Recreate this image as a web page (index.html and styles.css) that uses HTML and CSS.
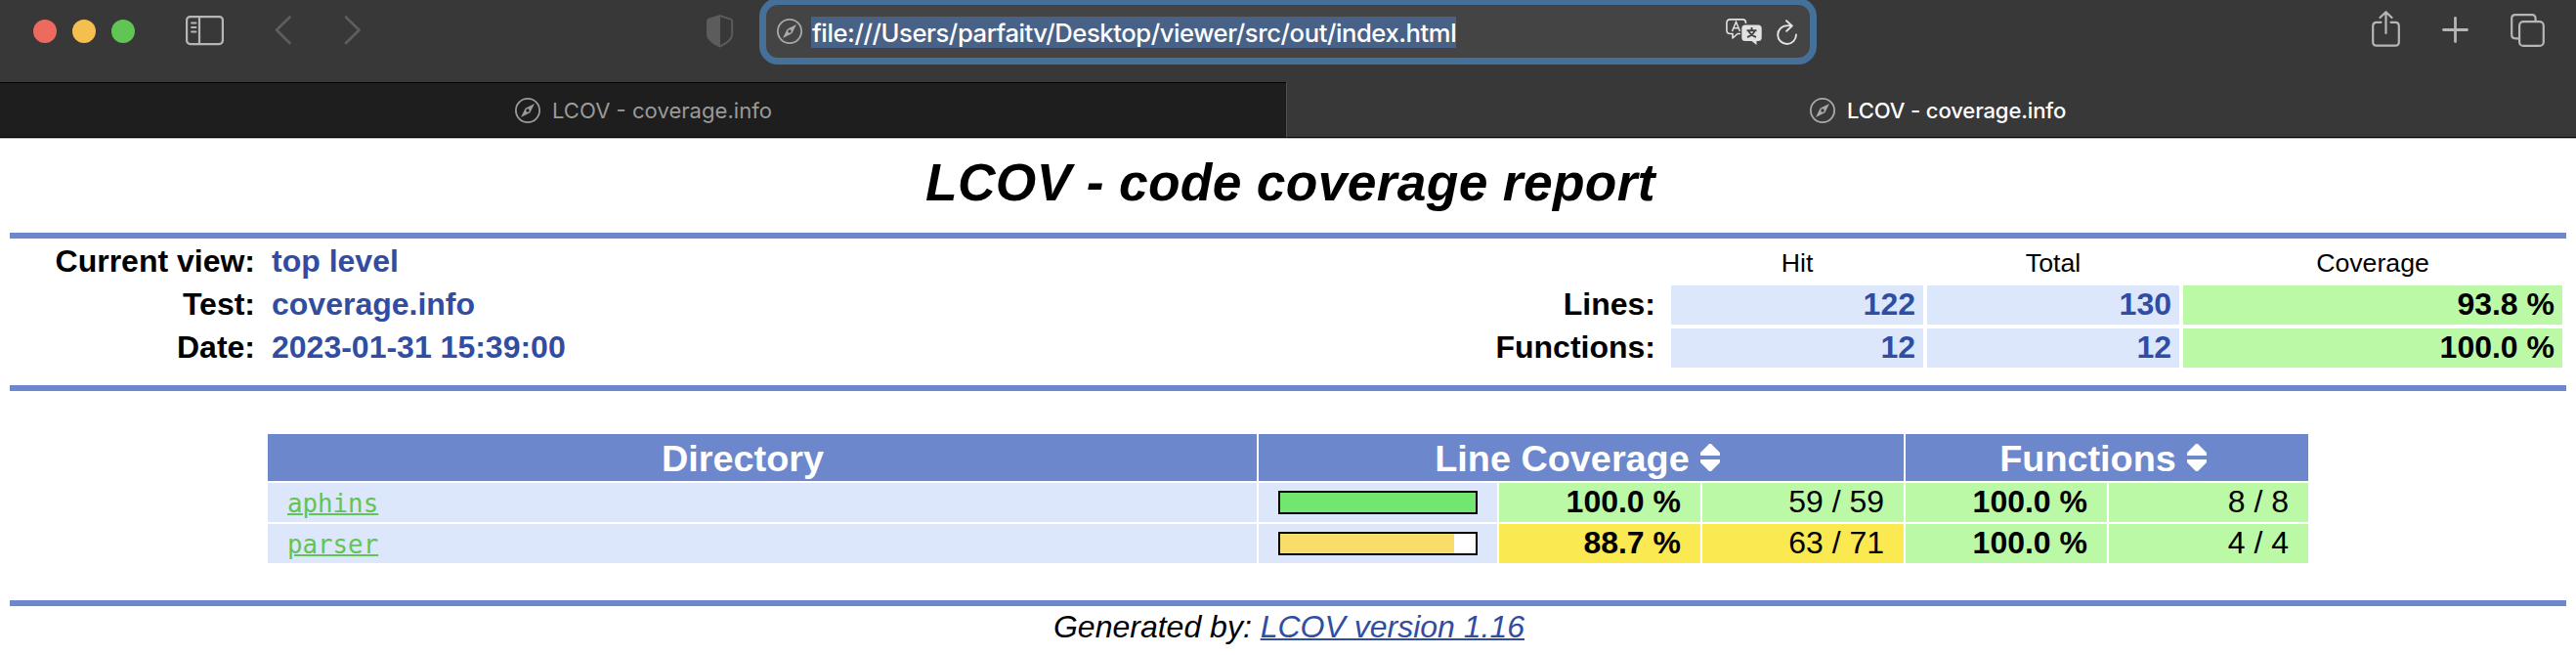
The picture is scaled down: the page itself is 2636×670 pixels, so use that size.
FILE: index.html
```html
<!DOCTYPE html>
<html lang="en">
<head>
<meta charset="utf-8">
<title>LCOV - coverage.info</title>
<link rel="stylesheet" href="styles.css">
</head>
<body>
<svg class="defs" width="0" height="0">
  <symbol id="compass" viewBox="0 0 26 26">
    <circle cx="13" cy="13" r="12.1" fill="none" stroke="currentColor" stroke-width="1.8"/>
    <path fill="currentColor" fill-rule="evenodd" d="M20 6 15.4 15.2 6 20 10.600 10.800ZM13 11.300a1.700 1.700 0 1 0 0 3.400a1.700 1.700 0 1 0 0-3.400Z"/>
  </symbol>
  <symbol id="sort" viewBox="0 0 20 28">
    <path fill="#fff" d="M9 0H11L20 9V12H0V9ZM0 16H20V19L11 28H9L0 19Z"/>
  </symbol>
</svg>
<header class="toolbar">
  <div class="tools-left">
    <div class="lights"><i class="light red"></i><i class="light yellow"></i><i class="light green"></i></div>
    <svg class="icon sidebar" width="40" height="32" viewBox="0 0 40 32"><rect x="1.1" y="1.1" width="36.8" height="28" rx="3.5"/><path d="M14 1V29"/><path class="thin" d="M6 7.5H10.5M6 12H10.5M6 16.5H10.5"/></svg>
    <svg class="icon dim back" width="18" height="30" viewBox="0 0 18 30"><path d="M15.5 1.5 2 14.8 15.5 28"/></svg>
    <svg class="icon dim forward" width="18" height="30" viewBox="0 0 18 30"><path d="M2 1.5 15.5 14.8 2 28"/></svg>
  </div>
  <svg class="shield" width="28" height="34" viewBox="0 0 28 34"><path fill="none" stroke="#5c5c5c" stroke-width="2" d="M14 1.2 24.800 4.600Q26.200 5.200 26.200 7V20C26.200 26 20 29.500 14 32.400C8 29.500 1.200 26 1.200 20V7Q1.200 5.200 2.500 4.600Z"/><path fill="#5c5c5c" d="M14 0V33.400C8 30.500 0 26 0 20V7Q0 5 2 4Z"/></svg>
  <div class="address">
    <svg class="compass url-compass" width="26" height="26"><use href="#compass"/></svg>
    <span class="selection"><span class="url">file:///Users/parfaitv/Desktop/viewer/src/out/index.html</span></span>
    <svg class="translate" width="37" height="28" viewBox="0 0 37 28"><path fill="none" stroke="#e2e2e2" stroke-width="1.6" stroke-linejoin="round" d="M15 15.5H12L7 20V15.5H4.5Q.9 15.5.9 12V4.500Q.9.9 4.500.9H17Q20.500.9 20.500 4.500V5"/><path fill="none" stroke="#e2e2e2" stroke-width="1.5" d="M6.500 13 10.500 3.500 14.500 13M8 9.800H13"/><path fill="#e2e2e2" d="M20 6.500H33Q36.700 6.500 36.700 10V19.500Q36.700 23 33 23H31.500V27L26.500 23H20Q16.300 23 16.300 19.500V10Q16.300 6.500 20 6.500Z"/><path fill="none" stroke="#444" stroke-width="1.900" d="M26.500 9V12M21.500 12.200H31.500M23.500 12.500Q25 17 31 19M29.500 12.500Q28 17 22 19"/></svg>
    <svg class="reload" width="22" height="27" viewBox="0 0 22 27"><path fill="none" stroke="#e2e2e2" stroke-width="1.900" stroke-linecap="round" stroke-linejoin="round" d="M20 15.500A9.400 9.400 0 1 1 10.600 6.200Q13 6 15.800 6.500M10 1.200 15.800 6.500 10.200 11.800"/></svg>
  </div>
  <div class="tools-right">
    <svg class="icon" width="30" height="38" viewBox="0 0 30 38"><path d="M9.500 11.800H5Q1.200 11.800 1.200 15.500V32Q1.200 35.700 5 35.700H24Q27.800 35.700 27.800 32V15.500Q27.800 11.800 24 11.800H19.500M14.500 23V1.500M8.500 7 14.500 1.200 20.500 7"/></svg>
    <svg class="icon plus" width="28" height="28" viewBox="0 0 28 28"><path class="bold" d="M13.500 1.500V25.500M1.500 13.500H25.500"/></svg>
    <svg class="icon tabs-icon" width="36" height="36" viewBox="0 0 36 36"><rect x="9.100" y="8.200" width="24.700" height="24.700" rx="4"/><path d="M25.600 8V5Q25.600 1.200 22 1.200H5Q1.200 1.200 1.200 5V21.500Q1.200 25.300 5 25.300H9"/></svg>
  </div>
</header>
<nav class="tabs">
  <div class="tab inactive"><svg class="compass" width="26" height="26"><use href="#compass"/></svg><span class="tab-title">LCOV - coverage.info</span></div>
  <div class="tab active"><svg class="compass" width="26" height="26"><use href="#compass"/></svg><span class="tab-title">LCOV - coverage.info</span></div>
</nav>
<main class="report">
  <h1 class="title">LCOV - code coverage report</h1>
  <div class="ruler"></div>
  <section class="summary">
    <dl class="meta">
      <dt>Current view:</dt><dd>top level</dd>
      <dt>Test:</dt><dd>coverage.info</dd>
      <dt>Date:</dt><dd>2023-01-31 15:39:00</dd>
    </dl>
    <div class="totals">
      <span></span><span class="head">Hit</span><span class="head">Total</span><span class="head">Coverage</span>
      <span class="label">Lines:</span><span class="num">122</span><span class="num">130</span><span class="num good">93.8 %</span>
      <span class="label">Functions:</span><span class="num">12</span><span class="num">12</span><span class="num good">100.0 %</span>
    </div>
  </section>
  <div class="ruler"></div>
  <section class="listing">
    <div class="th directory">Directory</div>
    <div class="th span3">Line Coverage <svg class="sort" width="20" height="28"><use href="#sort"/></svg></div>
    <div class="th span2">Functions <svg class="sort" width="20" height="28"><use href="#sort"/></svg></div>
    <div class="td dir"><a class="dir-link" href="#">aphins</a></div>
    <div class="td meter"><div class="bar"><div class="fill high" style="width:100%"></div></div></div>
    <div class="td per good">100.0 %</div><div class="td good">59 / 59</div>
    <div class="td per good">100.0 %</div><div class="td good">8 / 8</div>
    <div class="td dir"><a class="dir-link" href="#">parser</a></div>
    <div class="td meter"><div class="bar"><div class="fill med" style="width:89%"></div></div></div>
    <div class="td per warn">88.7 %</div><div class="td warn">63 / 71</div>
    <div class="td per good">100.0 %</div><div class="td good">4 / 4</div>
  </section>
  <div class="ruler"></div>
  <footer class="version">Generated by: <a class="lcov-link" href="#">LCOV version 1.16</a></footer>
</main>
</body>
</html>
```
FILE: styles.css
```css
* { box-sizing: border-box; }
body { margin: 0; background: #fff; color: #000; font-family: "Liberation Sans", Arial, sans-serif; font-size: 32px; width: 2636px; height: 670px; overflow: hidden; }
svg { display: block; flex: none; }
.defs { position: absolute; }

/* Browser window */
.toolbar { display: flex; align-items: flex-start; height: 84px; background: #383838; }
.tools-left { display: flex; align-items: flex-start; width: 723px; padding-left: 34px; }
.lights { display: flex; gap: 16px; padding-top: 20px; }
.light { width: 24px; height: 24px; border-radius: 50%; }
.red { background: #ec6a5e; }
.yellow { background: #f4bf4f; }
.green { background: #61c554; }
.icon { fill: none; stroke: #b6b6b6; stroke-width: 2.2; stroke-linecap: round; stroke-linejoin: round; }
.icon .thin { stroke-width: 1.8; }
.icon .bold { stroke-width: 2.8; }
.dim { stroke: #5e5e5e; stroke-width: 2.6; }
.sidebar { margin: 16px 0 0 52px; }
.back { margin: 16px 0 0 51px; }
.forward { margin: 16px 0 0 53px; }
.shield { margin-top: 15px; }
.address { display: flex; width: 1082px; height: 68px; margin: -2px 0 0 26px; padding: 0 13px 0 11px; border: 7px solid #457099; border-radius: 19px; background: #444; }
.compass { color: #a9a9a9; }
.url-compass { margin-top: 14px; }
.selection { display: block; width: 660px; height: 32px; margin: 12px 0 0 9px; padding-left: 1px; background: #486287; line-height: 0; }
.url { display: block; color: #fff; font: 500 25.6px/33px Inter, sans-serif; letter-spacing: -0.42px; white-space: nowrap; }
.translate { margin: 14px 0 0 276px; }
.reload { margin: 15px 0 0 15px; }
.tools-right { display: flex; align-items: flex-start; margin-left: 568px; padding-top: 11px; }
.plus { margin: 6px 0 0 42px; }
.tabs-icon { margin: 3px 0 0 42px; }
.tabs { display: flex; height: 58px; background: #383838; border-bottom: 1px solid #b5b5b5; }
.tab { display: flex; align-items: center; height: 57px; border-bottom: 1px solid #000; padding-top: 1px; font: 400 22.1px/30px Inter, sans-serif; gap: 12px; }
.inactive { width: 1316px; padding-left: 527px; background: #1e1e1e; border-top: 1px solid #000; color: #9a9a9a; padding-top: 0; }
.inactive .compass { color: #9a9a9a; }
.active { width: 1320px; padding-left: 535px; border-left: 1px solid #505050; color: #fff; font-weight: 500; letter-spacing: -0.15px; }
.tab-title { white-space: nowrap; }

/* Report */
.report { padding: 0 10px; }
.title { height: 96px; margin: 0; padding: 15px 0 0 5px; text-align: center; font-size: 53.33px; font-style: italic; line-height: 60px; letter-spacing: 0.33px; }
.ruler { height: 6px; background: #6c87cc; }
.summary { display: flex; height: 150px; justify-content: space-between; padding: 4px 4px 0 0; font-weight: bold; line-height: 38px; }
.meta { display: grid; grid-template-columns: 251px auto; grid-auto-rows: 40px; gap: 4px 17px; margin: 0; text-align: right; }
.meta dd { margin: 0; color: #304da2; text-align: left; }
.totals { display: grid; grid-template-columns: 260px 258px 258px 388px; grid-auto-rows: 40px; gap: 4px; text-align: right; }
.head { text-align: center; font-weight: normal; font-size: 26.67px; line-height: 42px; }
.label { padding-right: 12px; }
.num { padding-right: 8px; color: #304da2; background: #dce7fb; }
.good { background: #bbf9a6; }
.warn { background: #fbe951; }
.totals .good { color: #000; }
.listing { display: grid; grid-template-columns: 1012px 244px 206px 206px 206px 204px; grid-template-rows: 48px 40px 40px; gap: 2px; width: 2088px; height: 214px; margin: 0 264px; padding-top: 44px; line-height: 38px; }
.th { display: flex; justify-content: center; gap: 11px; padding-right: 8px; background: #6c87cc; color: #fff; font-size: 37.8px; font-weight: bold; line-height: 50px; }
.directory { padding-right: 40px; }
.span3 { grid-column: span 3; }
.span2 { grid-column: span 2; }
.sort { margin-top: 10px; }
.td { padding-right: 20px; text-align: right; white-space: nowrap; }
.per { font-weight: bold; }
.dir { padding: 0 0 0 20px; text-align: left; background: #dce7fb; }
.dir-link { color: #61c554; font-family: "DejaVu Sans Mono", monospace; font-size: 25.8px; text-decoration-thickness: 2px; }
.meter { padding: 8px 20px; background: #dce7fb; }
.bar { width: 204px; height: 24px; border: 2px solid #000; background: #fff; }
.fill { height: 20px; }
.high { background: #72e770; }
.med { background: #f9dd6b; }
.version { padding: 1px 0 0 2px; text-align: center; font-style: italic; line-height: 40px; }
.lcov-link { color: #304da2; text-decoration-thickness: 2px; }
```
